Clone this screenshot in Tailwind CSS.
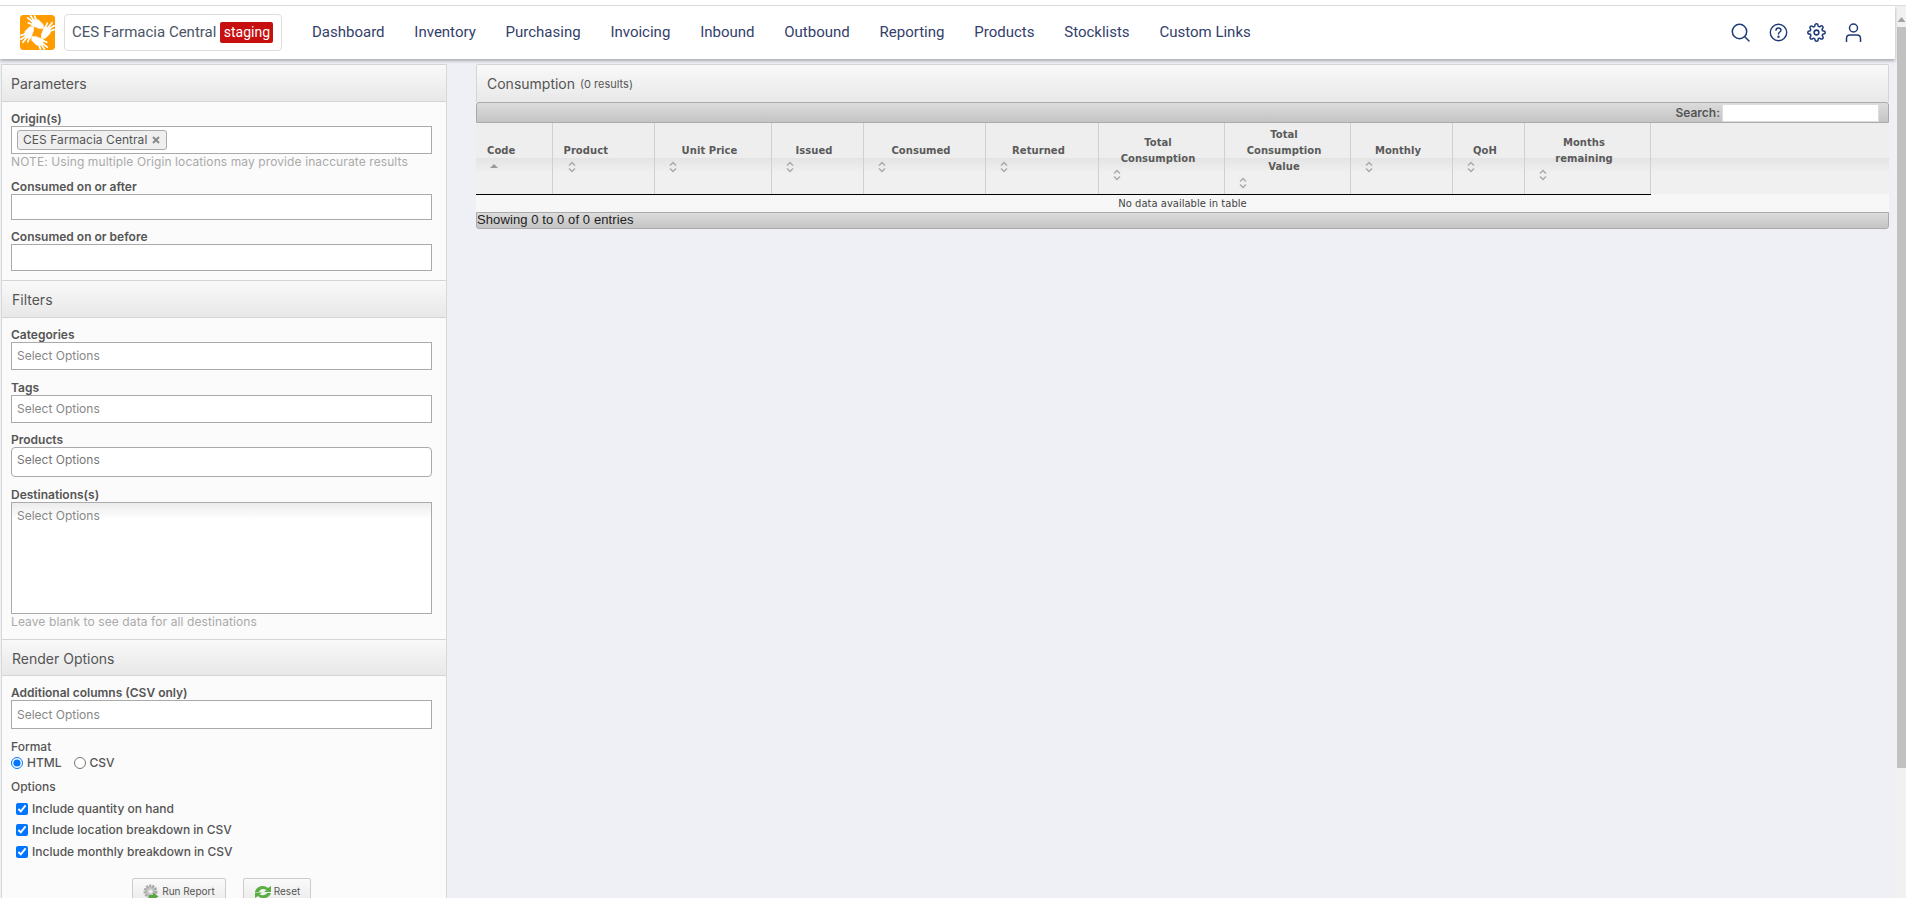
<!DOCTYPE html>
<html lang="en">
<head>
<meta charset="utf-8">
<title>Consumption</title>
<script src="https://cdn.jsdelivr.net/npm/@tailwindcss/browser@4"></script>
</head>
<body class="h-[898px] w-[1906px] overflow-hidden bg-[#eef0f5] font-['Inter','Liberation_Sans',sans-serif] text-[#555]">
<div class="h-[5px] bg-white"></div>
<div class="h-px bg-[#ddd]"></div>
<div class="flex h-[892px]">
  <div class="w-[1895px] shrink-0">
    <!-- top nav -->
    <header class="relative flex h-[53px] items-center bg-white pl-5 shadow-[0_2px_3px_rgba(0,0,0,0.28)]">
      <svg class="h-[35px] w-[35px] shrink-0 rounded-[3px]" viewBox="0 0 36 36">
        <rect width="36" height="36" rx="3" fill="#ff9c00"/>
        <g fill="#fff" stroke="#fff" stroke-linecap="round">
          <g><path d="M24 14 L20 14 L12 11 L13 5 L19 5 L24 10 Z" stroke-width="0.5"/><path d="M13 7 L8 3 M14 5.5 L11 1 M16.5 5 L15 1 M13 10 L8.5 8" stroke-width="1.8"/></g>
          <g transform="rotate(90 18 18)"><path d="M24 14 L20 14 L12 11 L13 5 L19 5 L24 10 Z" stroke-width="0.5"/><path d="M13 7 L8 3 M14 5.5 L11 1 M16.5 5 L15 1 M13 10 L8.5 8" stroke-width="1.8"/></g>
          <g transform="rotate(180 18 18)"><path d="M24 14 L20 14 L12 11 L13 5 L19 5 L24 10 Z" stroke-width="0.5"/><path d="M13 7 L8 3 M14 5.5 L11 1 M16.5 5 L15 1 M13 10 L8.5 8" stroke-width="1.8"/></g>
          <g transform="rotate(270 18 18)"><path d="M24 14 L20 14 L12 11 L13 5 L19 5 L24 10 Z" stroke-width="0.5"/><path d="M13 7 L8 3 M14 5.5 L11 1 M16.5 5 L15 1 M13 10 L8.5 8" stroke-width="1.8"/></g>
        </g>
      </svg>
      <div class="ml-[9px] flex h-[37px] w-[218px] shrink-0 items-center rounded-[4px] border border-[#ddd] pl-[7px] font-['Roboto',sans-serif] text-[15px] text-[#4a5565]">
        <span>CES Farmacia Central</span>
        <span class="ml-1 flex h-[21px] w-[53px] items-center justify-center rounded-[2px] bg-[#c70f0f] text-[14px] text-white">staging</span>
      </div>
      <nav class="ml-[30px] flex h-full items-center gap-[29.8px] pb-[1px] font-['Roboto',sans-serif] text-[15px] text-[#33406b]">
        <a>Dashboard</a><a>Inventory</a><a>Purchasing</a><a>Invoicing</a><a>Inbound</a><a>Outbound</a><a>Reporting</a><a>Products</a><a>Stocklists</a><a>Custom Links</a>
      </nav>
      <div class="absolute right-[33px] top-[17px] flex items-center gap-[19px] text-[#1e3a78]">
        <svg class="h-[19px] w-[19px]" viewBox="0 0 19 19" fill="none" stroke="currentColor" stroke-width="1.5" stroke-linecap="round"><circle cx="8.5" cy="8.5" r="7.2"/><path d="M13.8 13.8 L18 18"/></svg>
        <svg class="h-[19px] w-[19px]" viewBox="0 0 19 19" fill="none" stroke="currentColor" stroke-width="1.4" stroke-linecap="round"><circle cx="9.5" cy="9.5" r="8.2"/><path d="M7 7.3 C7 4.2 12 4.2 12 7.3 C12 9 9.5 9 9.5 11"/><circle cx="9.5" cy="13.8" r="0.5"/></svg>
        <svg class="h-[19px] w-[19px]" viewBox="0 0 24 24" fill="none" stroke="currentColor" stroke-width="1.9" stroke-linejoin="round"><circle cx="12" cy="12" r="3"/><path d="M19.4 15a1.65 1.65 0 0 0 .33 1.82l.06.06a2 2 0 1 1-2.83 2.83l-.06-.06a1.65 1.65 0 0 0-2.82 1.17V21a2 2 0 1 1-4 0v-.09A1.65 1.65 0 0 0 7.27 19.7l-.06.06a2 2 0 1 1-2.83-2.83l.06-.06a1.65 1.65 0 0 0-1.17-2.82H3a2 2 0 1 1 0-4h.09A1.65 1.65 0 0 0 4.3 7.27l-.06-.06a2 2 0 1 1 2.83-2.83l.06.06a1.65 1.65 0 0 0 2.82-1.17V3a2 2 0 1 1 4 0v.09a1.65 1.65 0 0 0 2.82 1.17l.06-.06a2 2 0 1 1 2.83 2.83l-.06.06A1.65 1.65 0 0 0 20.91 10H21a2 2 0 1 1 0 4h-.09A1.65 1.65 0 0 0 19.4 15z"/></svg>
        <svg class="h-[19px] w-[17px]" viewBox="0 0 17 19" fill="none" stroke="currentColor" stroke-width="1.5" stroke-linecap="round"><circle cx="8.5" cy="5" r="4"/><path d="M1.5 18.5 V15.5 C1.5 13 3 12 5 12 H12 C14 12 15.5 13 15.5 15.5 V18.5"/></svg>
      </div>
    </header>

    <div class="flex items-start pl-[1px] pt-[5px]">
      <!-- sidebar -->
      <aside class="h-[860px] w-[446px] shrink-0 border-x border-[#d8d8d8] bg-[#fbfbfb]">
        <div class="flex h-[38px] items-center border-y border-[#d5d5d5] bg-gradient-to-b from-[#f9f9f9] to-[#e8e8e8] pl-[9px] text-[14px] text-[#555]">Parameters</div>
        <div class="px-[9px] pb-[9px] pt-[9px] text-[12px]">
          <label class="block h-[15px] font-semibold leading-[15px]">Origin(s)</label>
          <div class="flex h-[28px] w-[421px] items-center border border-[#aaa] bg-white pl-[5px]">
            <span class="flex h-5 w-[150px] items-center rounded-[3px] border border-[#aaa] bg-[#efefef] pl-[5px] tracking-[0.05px]">CES Farmacia Central<svg class="ml-[5px] h-2 w-2" viewBox="0 0 8 8" fill="none" stroke="#8a8a8a" stroke-width="2"><path d="M1 1 L7 7 M7 1 L1 7"/></svg></span>
          </div>
          <p class="h-4 leading-4 tracking-[0.1px] text-[#aaa]">NOTE: Using multiple Origin locations may provide inaccurate results</p>
          <label class="mt-[9px] block h-[15px] font-semibold leading-[15px]">Consumed on or after</label>
          <div class="h-[26px] w-[421px] border border-[#aaa] bg-white"></div>
          <label class="mt-[9px] block h-[15px] font-semibold leading-[15px]">Consumed on or before</label>
          <div class="h-[27px] w-[421px] border border-[#aaa] bg-white"></div>
        </div>
        <div class="flex h-[38px] items-center border-y border-[#d5d5d5] bg-gradient-to-b from-[#f9f9f9] to-[#e8e8e8] pl-[10px] text-[14px] text-[#555]">Filters</div>
        <div class="px-[9px] pb-[10px] pt-[9px] text-[12px]">
          <label class="block h-[15px] font-semibold leading-[15px]">Categories</label>
          <div class="flex h-[28px] w-[421px] items-center border border-[#aaa] bg-white pl-[5px] text-[#888]">Select Options</div>
          <label class="mt-[10px] block h-[15px] font-semibold leading-[15px]">Tags</label>
          <div class="flex h-[28px] w-[421px] items-center border border-[#aaa] bg-white pl-[5px] text-[#888]">Select Options</div>
          <label class="mt-[9px] block h-[15px] font-semibold leading-[15px]">Products</label>
          <div class="h-[30px] w-[421px] rounded-[4px] border border-[#aaa] bg-white pl-[5px] pt-[3px] text-[#777]">Select Options</div>
          <label class="mt-[10px] block h-[15px] font-semibold leading-[15px]">Destinations(s)</label>
          <div class="h-[112px] w-[421px] border border-[#aaa] bg-gradient-to-b from-[#ececec] via-white via-15% to-white pl-[5px] pt-[4px] text-[#888]">Select Options</div>
          <p class="h-[15px] leading-[16px] tracking-[0.1px] text-[#aaa]">Leave blank to see data for all destinations</p>
        </div>
        <div class="flex h-[37px] items-center border-y border-[#d5d5d5] bg-gradient-to-b from-[#f9f9f9] to-[#e8e8e8] pl-[10px] pt-[2px] text-[14px] text-[#555]">Render Options</div>
        <div class="px-[9px] pt-[9px] text-[12px] font-medium">
          <label class="block h-[15px] font-semibold leading-[15px]">Additional columns (CSV only)</label>
          <div class="flex h-[29px] w-[421px] items-center border border-[#aaa] bg-white pl-[5px] font-normal text-[#888]">Select Options</div>
          <div class="mt-[10px] h-[15px] leading-[15px]">Format</div>
          <div class="mt-px flex h-4 items-center">
            <input type="radio" name="format" checked class="m-0 h-[12px] w-[12px]">
            <span class="ml-[4px]">HTML</span>
            <input type="radio" name="format" class="m-0 ml-[12px] h-[12px] w-[12px]">
            <span class="ml-[4px]">CSV</span>
          </div>
          <div class="mt-2 h-4 leading-4">Options</div>
          <div class="mt-[3px] pl-[5px]">
            <div class="flex h-[21.5px] items-center gap-1"><input type="checkbox" checked class="m-0 h-3 w-3"><span>Include quantity on hand</span></div>
            <div class="flex h-[21.5px] items-center gap-1"><input type="checkbox" checked class="m-0 h-3 w-3"><span>Include location breakdown in CSV</span></div>
            <div class="flex h-[21.5px] items-center gap-1"><input type="checkbox" checked class="m-0 h-3 w-3"><span>Include monthly breakdown in CSV</span></div>
          </div>
          <div class="mt-[15px] flex justify-center gap-[17px] pr-[5px] text-[10px] font-normal">
            <button class="flex h-[30px] w-[94px] items-start justify-center gap-[3px] rounded-t-[2px] border border-[#ccc] bg-gradient-to-b from-[#fafafa] to-[#e8e8e8] pt-[5px] text-[#555]">
              <svg class="h-4 w-4" viewBox="0 0 16 16"><circle cx="7.5" cy="7.5" r="5.5" fill="#c4c4c4" stroke="#a8a8a8" stroke-width="3" stroke-dasharray="2 1"/><circle cx="7.5" cy="7.5" r="2" fill="#eee"/><path d="M6 11 H10 V8.5 L15.5 12.5 L10 16 V14 H6 Z" fill="#5aa83c"/></svg>
              <span>Run Report</span>
            </button>
            <button class="flex h-[30px] w-[68px] items-start justify-center gap-[2px] rounded-t-[2px] border border-[#ccc] bg-gradient-to-b from-[#fafafa] to-[#e8e8e8] pt-[5px] text-[#555]">
              <svg class="h-4 w-[18px]" viewBox="0 0 18 16" fill="#5cae44"><path d="M1 8 C2 2 10 0 14 4 L17 2 V8 H10 L12.5 6 C9 4 6 5 5 8 Z"/><path d="M17 9 C16 14 8 16 4 12 L1 14 V8.5 H8 L5.5 10.5 C9 12 12 11 13 9 Z"/></svg>
              <span>Reset</span>
            </button>
          </div>
        </div>
      </aside>

      <!-- results panel -->
      <main class="ml-[29px] w-[1413px] shrink-0">
        <div class="flex h-[38px] items-center rounded-t-[2px] border-x border-t border-[#d5d5d5] bg-gradient-to-b from-[#f9f9f9] to-[#e8e8e8] pl-[10px] text-[14px] text-[#555]">Consumption<span class="ml-[5px] mt-px text-[11px]">(0 results)</span></div>
        <div class="flex h-[21px] items-center justify-end rounded-t-[3px] border border-[#aaa] bg-gradient-to-b from-[#dcdcdc] to-[#c4c4c4] pr-[9px] text-[12px] font-semibold text-[#555]">
          <span>Search:</span>
          <div class="ml-[2px] h-[18px] w-[157px] border border-[#ddd] bg-white"></div>
        </div>
        <table class="w-full table-fixed border-collapse font-['DejaVu_Sans',sans-serif]">
          <colgroup>
            <col class="w-[76px]"><col class="w-[102px]"><col class="w-[117px]"><col class="w-[92px]"><col class="w-[122px]"><col class="w-[113px]"><col class="w-[126px]"><col class="w-[126px]"><col class="w-[102px]"><col class="w-[72px]"><col class="w-[126px]"><col>
          </colgroup>
          <thead>
            <tr class="h-[71px] bg-[linear-gradient(#eeeeee_0%,#eeeeee_50%,#e4e4e4_50%,#f0f0f0_70%,#f0f0f0_100%)] text-[10px] font-bold leading-4 tracking-[0.05px] text-[#5a5a5a]">
              <th class="border-b border-r border-b-black border-r-[#d0d0d0] pl-[11px] pt-[2px] text-left align-middle font-bold">Code<svg class="ml-[2px] block h-4 w-[10px]" viewBox="0 0 10 16"><path d="M5 5 L9 9 H1 Z" fill="#999"/></svg></th>
              <th class="border-b border-r border-b-black border-r-[#d0d0d0] pl-[11px] pt-[2px] text-left align-middle font-bold">Product<svg class="ml-[3px] block h-4 w-[10px]" viewBox="0 0 10 16" fill="none" stroke="#aaa" stroke-width="1.5"><path d="M2 6.5 L5 3.5 L8 6.5 M2 9.5 L5 12.5 L8 9.5"/></svg></th>
              <th class="border-b border-r border-b-black border-r-[#d0d0d0] pl-[10px] pr-[16px] pt-[2px] text-center align-middle font-bold">Unit Price<svg class="ml-[3px] block h-4 w-[10px]" viewBox="0 0 10 16" fill="none" stroke="#aaa" stroke-width="1.5"><path d="M2 6.5 L5 3.5 L8 6.5 M2 9.5 L5 12.5 L8 9.5"/></svg></th>
              <th class="border-b border-r border-b-black border-r-[#d0d0d0] pl-[10px] pr-[16px] pt-[2px] text-center align-middle font-bold">Issued<svg class="ml-[3px] block h-4 w-[10px]" viewBox="0 0 10 16" fill="none" stroke="#aaa" stroke-width="1.5"><path d="M2 6.5 L5 3.5 L8 6.5 M2 9.5 L5 12.5 L8 9.5"/></svg></th>
              <th class="border-b border-r border-b-black border-r-[#d0d0d0] pl-[10px] pr-[16px] pt-[2px] text-center align-middle font-bold">Consumed<svg class="ml-[3px] block h-4 w-[10px]" viewBox="0 0 10 16" fill="none" stroke="#aaa" stroke-width="1.5"><path d="M2 6.5 L5 3.5 L8 6.5 M2 9.5 L5 12.5 L8 9.5"/></svg></th>
              <th class="border-b border-r border-b-black border-r-[#d0d0d0] pl-[10px] pr-[16px] pt-[2px] text-center align-middle font-bold">Returned<svg class="ml-[3px] block h-4 w-[10px]" viewBox="0 0 10 16" fill="none" stroke="#aaa" stroke-width="1.5"><path d="M2 6.5 L5 3.5 L8 6.5 M2 9.5 L5 12.5 L8 9.5"/></svg></th>
              <th class="border-b border-r border-b-black border-r-[#d0d0d0] pl-[10px] pr-[16px] pt-[2px] text-center align-middle font-bold">Total Consumption<svg class="ml-[3px] block h-4 w-[10px]" viewBox="0 0 10 16" fill="none" stroke="#aaa" stroke-width="1.5"><path d="M2 6.5 L5 3.5 L8 6.5 M2 9.5 L5 12.5 L8 9.5"/></svg></th>
              <th class="border-b border-r border-b-black border-r-[#d0d0d0] pl-[10px] pr-[16px] pt-[2px] text-center align-middle font-bold">Total Consumption Value<svg class="ml-[3px] block h-4 w-[10px]" viewBox="0 0 10 16" fill="none" stroke="#aaa" stroke-width="1.5"><path d="M2 6.5 L5 3.5 L8 6.5 M2 9.5 L5 12.5 L8 9.5"/></svg></th>
              <th class="border-b border-r border-b-black border-r-[#d0d0d0] pl-[10px] pr-[16px] pt-[2px] text-center align-middle font-bold">Monthly<svg class="ml-[3px] block h-4 w-[10px]" viewBox="0 0 10 16" fill="none" stroke="#aaa" stroke-width="1.5"><path d="M2 6.5 L5 3.5 L8 6.5 M2 9.5 L5 12.5 L8 9.5"/></svg></th>
              <th class="border-b border-r border-b-black border-r-[#d0d0d0] pl-[10px] pr-[16px] pt-[2px] text-center align-middle font-bold">QoH<svg class="ml-[3px] block h-4 w-[10px]" viewBox="0 0 10 16" fill="none" stroke="#aaa" stroke-width="1.5"><path d="M2 6.5 L5 3.5 L8 6.5 M2 9.5 L5 12.5 L8 9.5"/></svg></th>
              <th class="border-b border-r border-b-black border-r-[#d0d0d0] pl-[10px] pr-[16px] pt-[2px] text-center align-middle font-bold">Months remaining<svg class="ml-[3px] block h-4 w-[10px]" viewBox="0 0 10 16" fill="none" stroke="#aaa" stroke-width="1.5"><path d="M2 6.5 L5 3.5 L8 6.5 M2 9.5 L5 12.5 L8 9.5"/></svg></th>
              <th></th>
            </tr>
          </thead>
          <tbody>
            <tr class="h-[17px] bg-[#f7f7f7]">
              <td colspan="12" class="p-0 text-center text-[10px] leading-[17px] text-[#444]">No data available in table</td>
            </tr>
          </tbody>
        </table>
        <div class="flex h-[17px] items-center rounded-b-[3px] border border-[#aaa] bg-gradient-to-b from-[#dcdcdc] to-[#c4c4c4] font-['Liberation_Sans',sans-serif] text-[13px] tracking-[0.1px] text-[#222]">Showing 0 to 0 of 0 entries</div>
      </main>
    </div>
  </div>

  <!-- page scrollbar -->
  <div class="flex w-[11px] shrink-0 flex-col items-end bg-[#f1f1f1]">
    <svg class="mt-[9px] h-[12px] w-[9px]" viewBox="0 0 9 12"><path d="M4.5 2 L8.5 7 H0.5 Z" fill="#a3a3a3"/></svg>
    <div class="h-[741px] w-[9px] bg-[#c1c1c1]"></div>
  </div>
</div>
</body>
</html>
